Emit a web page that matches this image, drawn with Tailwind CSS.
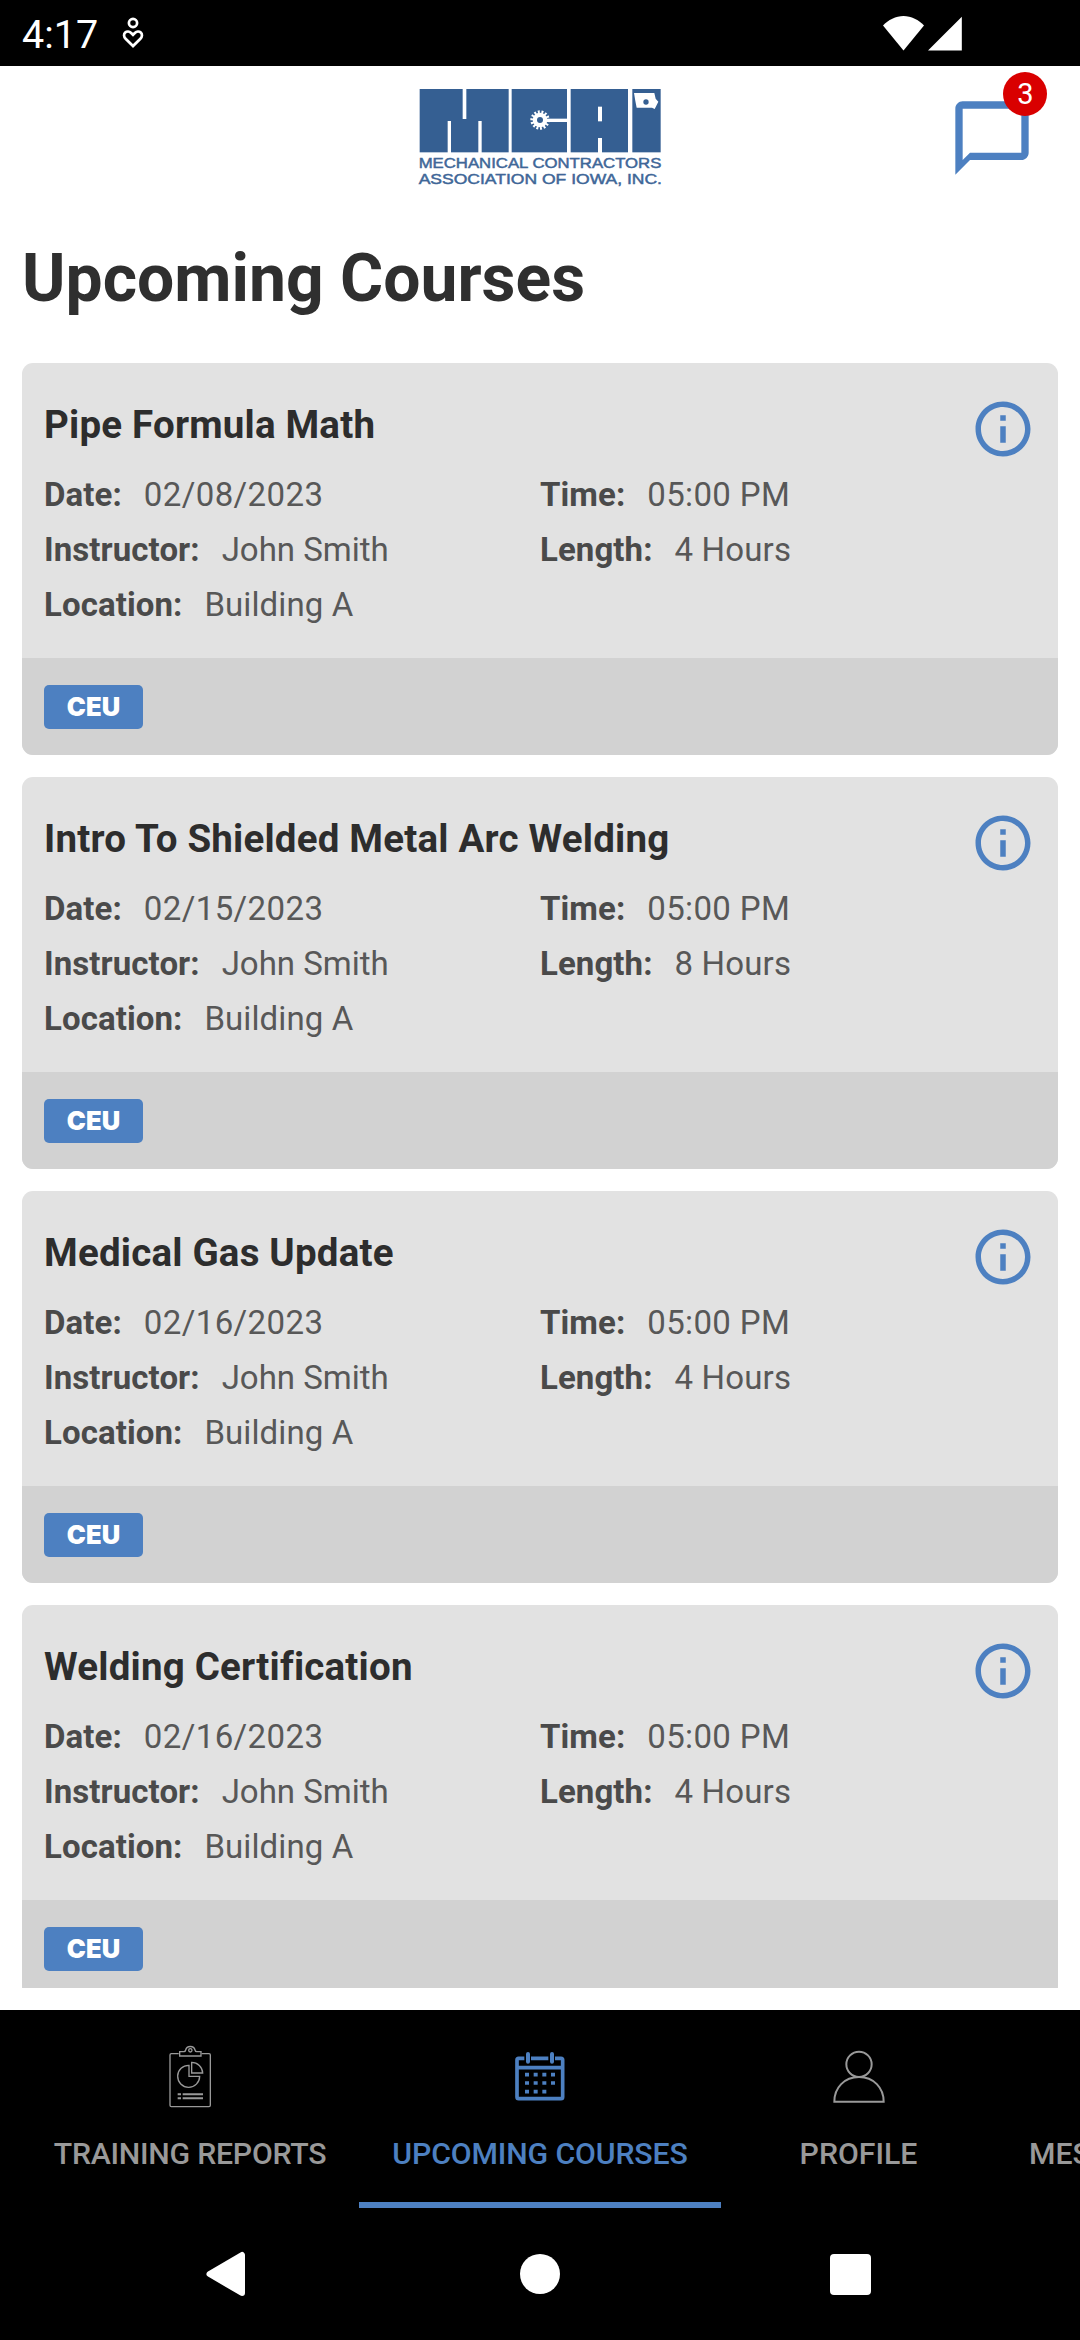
<!DOCTYPE html>
<html lang="en">
<head>
    <meta charset="UTF-8">
    <meta name="viewport" content="width=device-width, initial-scale=1.0">
    <title>Upcoming Courses</title>
    <script src="https://cdn.jsdelivr.net/npm/@tailwindcss/browser@4"></script>
</head>
<body class="bg-white font-['Roboto',sans-serif] text-[#4a4a4a]">
<div class="flex h-[2340px] w-[1080px] flex-col overflow-hidden">

    <!-- Status bar -->
    <div class="flex h-[66px] shrink-0 items-center bg-black pl-[22px] text-white">
        <span class="w-[75px] pt-[3px] text-[39.5px] leading-[66px]">4:17</span>
        <svg class="ml-6 h-9 w-6" viewBox="0 0 24 36" fill="none" stroke="#fff" stroke-width="2.7">
            <circle cx="12" cy="8" r="4.1"/>
            <path d="M12 31l-7.400-7.300c-2-2-2-4.600-.4-6.100 1.700-1.600 4.200-1.300 5.700.2l2.100 2 2.100-2c1.500-1.500 4-1.800 5.700-.2 1.600 1.500 1.600 4.100-.4 6.100z"/>
        </svg>
        <svg class="ml-auto mr-[118px] h-[36px] w-[79px]" viewBox="883 14 79 36" fill="#fff">
            <path d="M903.500 49.500L883 24.500C888 19 896 15 903.500 15s15.500 4 20.500 9.500z"/>
            <path d="M928 49.500h33.800V15.800z"/>
        </svg>
    </div>

    <!-- Header -->
    <header class="flex h-[174px] shrink-0 items-start">
        <svg class="ml-[400px] mt-1 h-[130px] w-[280px]" viewBox="0 0 840 390">
            <g fill="#355f92">
                <rect x="59" y="57" width="267" height="190"/>
                <rect x="335" y="57" width="166" height="190"/>
                <rect x="512" y="57" width="172" height="190"/>
                <rect x="697" y="57" width="85" height="190"/>
            </g>
            <g fill="#fff">
                <rect x="188" y="55" width="11" height="92"/>
                <rect x="143" y="153" width="10" height="96"/>
                <rect x="235" y="153" width="10" height="96"/>
                <rect x="440" y="146" width="63" height="10"/>
                <rect x="594" y="110" width="12" height="44"/>
                <rect x="594" y="204" width="12" height="45"/>
                <circle cx="420" cy="150" r="22"/>
                <path d="M702 69h61l4 17 8 9-6 12-5 10-8-4h-46l-4-20z"/>
            </g>
            <circle cx="420" cy="150" r="24" fill="none" stroke="#fff" stroke-width="10" stroke-dasharray="5.600 5"/>
            <circle cx="420" cy="150" r="9" fill="#355f92"/>
            <circle cx="738" cy="96" r="8" fill="#355f92"/>
            <g fill="#3f6798" font-family="Liberation Sans, sans-serif" font-size="43" stroke="#3f6798" stroke-width="1.4">
                <text x="56" y="294" textLength="728" lengthAdjust="spacingAndGlyphs">MECHANICAL CONTRACTORS</text>
                <text x="56" y="341" textLength="730" lengthAdjust="spacingAndGlyphs">ASSOCIATION OF IOWA, INC.</text>
            </g>
        </svg>
        <div class="relative ml-[268px] mt-[28px]">
            <svg class="size-[88px]" viewBox="0 0 24 24" fill="#4d80c1">
                <path d="M20 2H4c-1.100 0-2 .9-2 2v18l4-4h14c1.100 0 2-.9 2-2V4c0-1.100-.9-2-2-2zm0 14H6l-2 2V4h16v12z"/>
            </svg>
            <span class="absolute left-[55px] top-[-22px] size-11 rounded-full bg-[#d90000] pl-px text-center text-[29px] leading-[44px] text-white">3</span>
        </div>
    </header>

    <h1 class="shrink-0 px-[22px] text-[66px] leading-[78px] font-bold text-[#2f2f2f]">Upcoming Courses</h1>

    <!-- Course list -->
    <main id="course-list" class="mt-[45px] flex h-[1625px] shrink-0 flex-col gap-[22px] overflow-hidden px-[22px]"></main>

    <!-- Tabs -->
    <nav class="mt-[22px] flex h-[198px] shrink-0 bg-black pl-[21px] text-[30.25px] font-medium text-[#999]">
        <div class="flex w-[338px] shrink-0 flex-col items-center pt-[33px]">
            <svg class="size-[66px]" viewBox="468 250 198 198" fill="none" stroke="#999" stroke-width="4">
                <path d="M533 282h-22q-4 0-4 4v151q0 4 4 4h113q4 0 4-4v-151q0-4-4-4h-22"/>
                <path d="M536 289v-13h13q4 0 5-5c3-14 25-14 28 0q1 5 5 5h13v13z"/>
                <circle cx="568" cy="272" r="5"/>
                <path d="M564 317a33 33 0 1 0 32 33h-32z"/>
                <path d="M572 308v32h33a33 33 0 0 0-33-32z"/>
                <path stroke-width="6" d="M530 404h10m5 0h61M530 416h10m5 0h61"/>
            </svg>
            <span class="mt-[27px] leading-9 tracking-[-0.25px] whitespace-nowrap">TRAINING REPORTS</span>
        </div>
        <div class="flex w-[362px] shrink-0 flex-col items-center border-b-[6px] border-[#4d80c1] pt-[33px] text-[#4d80c1]">
            <svg class="size-[66px]" viewBox="501 250 198 198" fill="none" stroke="#4d80c1" stroke-width="11">
                <path d="M553 296h-17q-5 0-5 5v111q0 5 5 5h127q5 0 5-5v-111q0-5-5-5h-18M573 296h52M531 324h137"/>
                <path stroke-width="12" stroke-linecap="round" d="M564 283v23M636 283v23"/>
                <path stroke-dasharray="12 14" d="M555 345h90M555 370h90M555 396h64"/>
            </svg>
            <span class="mt-[27px] leading-9 tracking-[-0.13px] whitespace-nowrap">UPCOMING COURSES</span>
        </div>
        <div class="flex w-[275px] shrink-0 flex-col items-center pt-[33px]">
            <svg class="size-[66px]" viewBox="317 250 198 198" fill="none" stroke="#999" stroke-width="6">
                <circle cx="416" cy="314" r="38"/>
                <path d="M342 426c0-42 30-74 74-74s74 32 74 74z"/>
            </svg>
            <span class="mt-[27px] leading-9">PROFILE</span>
        </div>
        <div class="flex shrink-0 flex-col px-[33px] pt-[126px]">
            <span class="leading-9">MESSAGES</span>
        </div>
    </nav>

    <!-- System navigation -->
    <div class="flex h-[132px] shrink-0 items-center bg-black pl-[205px]">
        <svg class="h-[46px] w-[41px]" viewBox="0 0 41 46" fill="#fff" stroke="#fff" stroke-width="6" stroke-linejoin="round">
            <path d="M4.500 23L37 4v38z"/>
        </svg>
        <div class="ml-[274px] size-10 rounded-full bg-white"></div>
        <div class="ml-[270px] size-[41px] rounded bg-white"></div>
    </div>
</div>

<script>
    const courses = [
        { title: 'Pipe Formula Math', date: '02/08/2023', length: '4 Hours' },
        { title: 'Intro To Shielded Metal Arc Welding', date: '02/15/2023', length: '8 Hours' },
        { title: 'Medical Gas Update', date: '02/16/2023', length: '4 Hours' },
        { title: 'Welding Certification', date: '02/16/2023', length: '4 Hours' },
    ];

    const field = (label, value, tracking = 'tracking-normal') => `
        <div class="flex gap-[22px]">
            <span class="font-bold tracking-[0.08px]">${label}:</span><span class="text-[#585858] ${tracking}">${value}</span>
        </div>`;

    document.getElementById('course-list').innerHTML = courses.map(c => `
        <article class="h-[392px] shrink-0 overflow-hidden rounded-[11px] bg-[#e2e2e2]">
            <div class="flex h-[295px] justify-between px-[22px]">
                <div class="w-[926px] pt-10">
                    <h2 class="text-[38.5px] leading-[44px] font-bold tracking-[0.2px] text-[#2d2d2d]">${c.title}</h2>
                    <div class="mt-5 grid grid-cols-[496px_430px] text-[33px] leading-[55px]">
                        ${field('Date', c.date, 'tracking-[0.4px]')}
                        ${field('Time', '05:00 PM', 'tracking-[0.35px]')}
                        ${field('Instructor', 'John Smith')}
                        ${field('Length', c.length, 'tracking-[0.15px]')}
                        ${field('Location', 'Building A', 'tracking-[0.1px]')}
                    </div>
                </div>
                <svg class="mt-[33px] size-[66px] shrink-0" viewBox="0 0 24 24" fill="#4d80c1">
                    <path d="M11 7h2v2h-2zm0 4h2v6h-2zm1-9C6.480 2 2 6.480 2 12s4.480 10 10 10 10-4.480 10-10S17.520 2 12 2zm0 18c-4.410 0-8-3.590-8-8s3.590-8 8-8 8 3.590 8 8-3.590 8-8 8z"/>
                </svg>
            </div>
            <div class="h-[97px] bg-[#d2d2d2] pl-[22px] pt-[27px]">
                <span class="block h-11 w-[99px] rounded-[5px] bg-[#4d80c1] text-center font-['Inter',sans-serif] text-[25.6px] leading-[44px] font-black text-white">CEU</span>
            </div>
        </article>`).join('');
</script>
</body>
</html>
